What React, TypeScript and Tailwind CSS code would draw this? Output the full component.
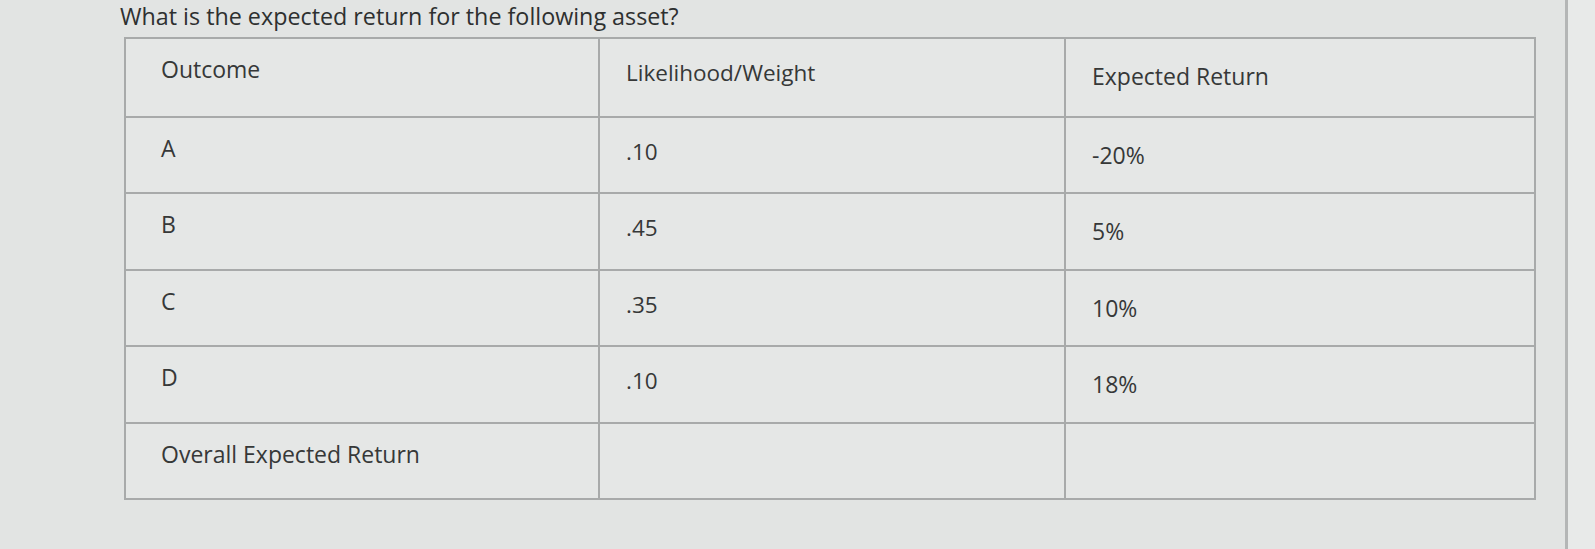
import React from "react";

const rows: [string, string, string][] = [
  ["Outcome", "Likelihood/Weight", "Expected Return"],
  ["A", ".10", "-20%"],
  ["B", ".45", "5%"],
  ["C", ".35", "10%"],
  ["D", ".10", "18%"],
  ["Overall Expected Return", "", ""],
];

export default function App() {
  return (
    <div
      className="w-[1595px] h-[549px] overflow-hidden bg-[#e2e4e3] flex text-[#363838]"
      style={{ fontFamily: '"Open Sans", "Noto Sans", sans-serif' }}
    >
      <div className="w-[1568px] shrink-0 border-r-[3px] border-[#b4b6b6] flex flex-col pl-[120px]">
        <div className="text-[23.3px] leading-[32px] text-[#2e3030]">
          What is the expected return for the following asset?
        </div>
        <div className="ml-[4px] mt-[5px] w-[1412px] border-2 border-[#a8aaaa] bg-[#e5e7e6] flex flex-col">
          {rows.map((r, i) => (
            <div
              key={i}
              className={`flex h-[76.5px] ${i > 0 ? "border-t-2 border-[#a8aaaa]" : ""}`}
            >
              <div className="w-[472px] pl-[35px] pt-[16px] text-[23px] leading-[28px]">{r[0]}</div>
              <div className="w-[466px] border-l-2 border-[#a8aaaa] pl-[26px] pt-[20px] text-[22.5px] leading-[28px]">
                {r[1]}
              </div>
              <div className="flex-1 border-l-2 border-[#a8aaaa] pl-[26px] pt-[23px] text-[23px] leading-[28px]">
                {r[2]}
              </div>
            </div>
          ))}
        </div>
      </div>
      <div className="flex-1 bg-[#e8eae9]" />
    </div>
  );
}
